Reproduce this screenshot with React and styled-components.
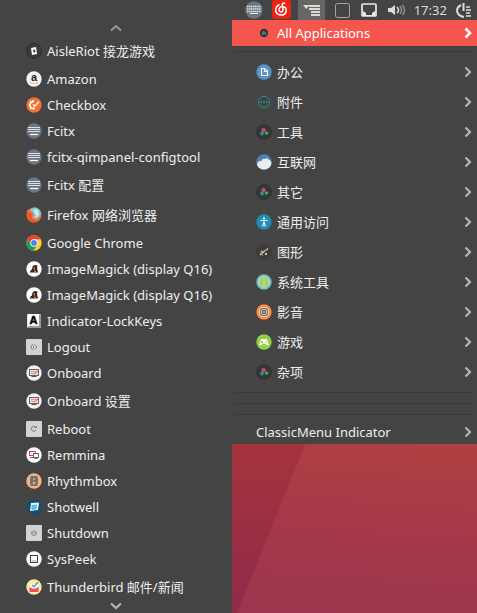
import React from "react";
import styled, { createGlobalStyle, css } from "styled-components";

const GlobalStyle = createGlobalStyle`
  * { box-sizing: border-box; }
  body {
    margin: 0;
    background: #444444;
    color: #eeeeec;
    font-family: "Noto Sans", "Noto Sans CJK SC", sans-serif;
    font-size: 13px;
  }
`;

const Desktop = styled.div`
  display: grid;
  grid-template-columns: 232fr 245fr;
  min-height: 100vh;
`;

const SubMenu = styled.nav`
  display: flex;
  flex-direction: column;
  background: #444444;
`;

const Side = styled.div`
  display: flex;
  flex-direction: column;
`;

const CategoryMenu = styled.nav`
  display: flex;
  flex-direction: column;
  background: #444444;
`;

const MenuList = styled.ul`
  list-style: none;
  margin: 0;
  padding: 0;
`;

const ScrollButton = styled.button`
  display: flex;
  align-items: center;
  justify-content: center;
  height: ${(p) => (p.$up ? "36px" : "11px")};
  padding: ${(p) => (p.$up ? "20px 0 0" : "0 0 4px")};
  border: 0;
  background: none;
  color: ${(p) => (p.$up ? "#999999" : "#b4b4b4")};
`;

const MenuButton = styled.button`
  display: flex;
  align-items: center;
  gap: 5px;
  width: 100%;
  height: 26px;
  padding: 0 5px 0 26px;
  border: 0;
  background: none;
  color: inherit;
  font: inherit;
  line-height: 20px;
  text-align: left;
  white-space: nowrap;
  ${(p) => p.$tall && css`height: 30px;`}
  ${(p) => p.$category && css`padding-left: 24px;`}
  ${(p) => p.$active && css`background: #f4554d; color: #ffffff;`}
  ${(p) => p.$last && css`height: 24px;`}
`;

const Label = styled.span`
  flex: 1;
`;

const Glyph = styled.svg`
  display: block;
  flex: none;
  overflow: visible;
`;

const Chevron = styled.svg`
  flex: none;
  color: ${(p) => (p.$active ? "#ffffff" : "#b4b4b4")};
`;

const Separator = styled.hr`
  width: auto;
  height: 1px;
  margin: 5px 4px 5px 3px;
  border: 0;
  background: #3a3a3a;
`;

const Panel = styled.header`
  display: flex;
  align-items: center;
  justify-content: space-between;
  height: 20px;
  padding: 0 3px 0 12px;
  background: #444444;
`;

const PanelButton = styled.button`
  display: flex;
  align-items: center;
  justify-content: center;
  min-width: ${(p) => (p.$open ? "27px" : "20px")};
  height: 20px;
  padding: 0;
  border: 0;
  background: ${(p) => (p.$open ? "#666666" : "none")};
  color: #dfdbd2;
  font: inherit;
`;

const Wallpaper = styled.div`
  position: relative;
  flex: 1;
  background: linear-gradient(184deg, #b04041 0%, #a4384a 55%, #9b364e 100%);
  &::before {
    content: "";
    position: absolute;
    inset: 0;
    background: linear-gradient(180deg, #a5333c, #912b4b);
    clip-path: polygon(0 0, 30% 0, 2% 100%, 0 100%);
  }
`;

const drawings = {
  cards: (
    <>
      <circle cx="8" cy="8" r="7.5" fill="#3a3a3a" stroke="#2d2d2d" />
      <path d="M5 5l5-1 1 7-5 1z" fill="#fff" />
      <path d="M8 6l1.5 2L8.3 10 7 8z" fill="#333" />
    </>
  ),
  amazon: (
    <>
      <circle cx="8" cy="8" r="7.7" fill="#f3f3f3" />
      <text x="8" y="10" textAnchor="middle" fontFamily="Liberation Sans, sans-serif" fontSize="11" fontWeight="700" fill="#222">a</text>
      <path d="M4 11.5q4 2 8 0" fill="none" stroke="#f5b66a" strokeWidth="1.2" />
    </>
  ),
  checkbox: (
    <>
      <circle cx="8" cy="8" r="7.7" fill="#f6712d" />
      <path d="M7.500 5A3.2 3.2 0 1 0 8.5 11M4 4l1.4 1.4M2.8 8h2M4.2 12l1.4-1.4M7 3v2M8 10.500v2" fill="none" stroke="#fff" strokeWidth="1.6" />
      <path d="M7 7.5L8.7 9.3 13 4.8" fill="none" stroke="#fff" strokeWidth="1.4" />
    </>
  ),
  keyboard: (
    <>
      <circle cx="8" cy="8" r="7.7" fill="#6c7682" />
      <path d="M2 4.5h12M2 6.5h12M2 8.5h12" stroke="#dde0e3" strokeWidth="1.2" />
      <path d="M4 11.5h8" stroke="#fff" strokeWidth="1.3" />
    </>
  ),
  firefox: (
    <>
      <circle cx="8" cy="8" r="7.7" fill="#e9592c" />
      <path d="M4 2.5Q8-.8 12 1.6 15.5 4 14.8 8 14 13 9.5 12.8 6 12.3 6.2 9L9 8 6 7 5 4z" fill="#7ec9dd" />
      <path d="M8 2l4 1 1 4-2 4-2 1 1-4-2-2z" fill="#c5e9ee" />
      <path d="M1 5l2-2 1 2 3 1-1 2 1 3 3 1 4-2" fill="none" stroke="#f37940" strokeWidth="1.3" />
    </>
  ),
  chrome: (
    <>
      <circle cx="8" cy="8" r="7.7" fill="#ffce32" />
      <path d="M1.3 4.1A7.7 7.7 0 0 1 14.7 4.2H8L4.6 9.9z" fill="#ea4335" />
      <path d="M1.3 4.1L4.7 10 8 11.8 11 10.2 7.5 15.7A7.7 7.7 0 0 1 1.3 4.1z" fill="#17a05d" />
      <circle cx="8" cy="8" r="3.7" fill="#fff" />
      <circle cx="8" cy="8" r="2.9" fill="#4285f4" />
    </>
  ),
  magick: (
    <>
      <circle cx="8" cy="8" r="7.7" fill="#fff" />
      <path d="M4 11.500l.5-2 1.500-1 .5-3 2-1.500 3 .5L11 7l1 4.500z" fill="#29252b" />
      <path d="M7.500 6.700l1.500.6M8.500 10.800h1.500" stroke="#f29b25" strokeWidth="1.4" />
      <circle cx="8.500" cy="9" r="1" fill="#e04435" />
    </>
  ),
  lock: (
    <>
      <rect x="1" y="1" width="14" height="14" rx="1" fill="#ddd" />
      <path d="M1 15l2-2h9.5V2L15 1v14z" fill="#999" />
      <rect x="2" y="1" width="11" height="11.5" fill="#fff" />
      <text x="7.500" y="11" textAnchor="middle" fontFamily="Liberation Sans, sans-serif" fontSize="11" fontWeight="700" fill="#000" stroke="#000" strokeWidth=".5">A</text>
    </>
  ),
  logout: (
    <>
      <rect width="16" height="16" rx="1" fill="#d2d2d2" />
      <path d="M7.5 5.5a2.5 2.5 0 1 0 0 5M8.5 5.5L11 8l-2.500 2.5M7.5 7v2" fill="none" stroke="#888" />
    </>
  ),
  reboot: (
    <>
      <rect width="16" height="16" rx="1" fill="#d2d2d2" />
      <path d="M9.5 6a2.5 2.5 0 1 0 .5 3M8.5 6.500h2V5" fill="none" stroke="#777" />
    </>
  ),
  shutdown: (
    <>
      <rect width="16" height="16" rx="1" fill="#d2d2d2" />
      <path d="M6.5 6a2.5 2.5 0 1 0 3 0M5 8h6M8 5v2" fill="none" stroke="#888" />
    </>
  ),
  onboard: (
    <>
      <circle cx="8" cy="8" r="7.7" fill="#f1f1f1" />
      <rect x="3.5" y="4.5" width="9" height="6" fill="#eadede" stroke="#666" />
      <path d="M5 6.5h6M5 8.5h4" stroke="#ef9090" />
      <path d="M8.500 9L12 6" stroke="#e15d5d" />
      <path d="M5.5 11.5h5" stroke="#555" />
    </>
  ),
  remmina: (
    <>
      <circle cx="8" cy="8" r="7.7" fill="#fff" />
      <rect x="3.5" y="4.5" width="6" height="4" fill="#fff" stroke="#dc3d63" />
      <path d="M4 10.500h3" stroke="#dc3d63" />
      <rect x="7.5" y="6.5" width="5" height="4" fill="#fff" stroke="#5b6576" />
      <path d="M8.5 11.500h3" stroke="#5b6576" />
    </>
  ),
  rhythm: (
    <>
      <circle cx="8" cy="8" r="7.7" fill="#ffb17c" />
      <rect x="4" y="3" width="8" height="10" rx="1" fill="#687176" />
      <path d="M5 4v1M11 4v1M5 11v1M11 11v1" stroke="#a3a9a3" />
      <circle cx="8" cy="6" r="1" fill="#dfb25a" />
      <circle cx="8" cy="10" r="1.5" fill="#dfb25a" />
    </>
  ),
  shotwell: (
    <>
      <circle cx="8" cy="8" r="7.7" fill="#144c6a" />
      <path d="M5 4l8-.5-1 7.500-8 1z" fill="#e9f8ff" />
      <path d="M5.500 6l5.500-.5-.5 5-5 .5z" fill="#62bbed" />
    </>
  ),
  syspeek: (
    <>
      <circle cx="8" cy="8" r="7.7" fill="#fff" />
      <rect x="4.5" y="4.5" width="7" height="7" fill="#fff" stroke="#444" />
      <path d="M5.5 10h5" stroke="#999" />
    </>
  ),
  mail: (
    <>
      <circle cx="8" cy="8" r="7.7" fill="#fce9a8" />
      <path d="M4 5h8v6H4z" fill="#fff" />
      <path d="M3.5 8L8 10l4.5-2v5h-9z" fill="#ef5350" />
      <path d="M6 6L8 8 12 3" fill="none" stroke="#49a4bc" strokeWidth="1.5" />
    </>
  ),
  office: (
    <>
      <circle cx="8" cy="8" r="7.7" fill="#5b91c7" />
      <path d="M5.5 4.5h3L11.5 7v4.5h-6zM8.5 4.5V7.5h3" fill="none" stroke="#edf5ff" strokeWidth="1.2" />
    </>
  ),
  dots: (
    <>
      <circle cx="8" cy="8" r="5.7" fill="none" stroke="#298c91" />
      <path d="M4 8h2M7 8h2M10 8h2" stroke="#298c91" strokeWidth="1.500" />
    </>
  ),
  rings: (
    <>
      <circle cx="8" cy="8" r="7.5" fill="#373737" stroke="#323232" />
      <circle cx="7.5" cy="6" r="1.5" fill="#bd3f4c" stroke="#ed6071" />
      <circle cx="6" cy="9.5" r="1.4" fill="#257c9f" stroke="#35a2c9" />
      <circle cx="10.5" cy="9" r="1.3" fill="#319c47" stroke="#42b966" />
    </>
  ),
  ringsSmall: (
    <>
      <circle cx="8" cy="8" r="4.2" fill="#30383d" />
      <circle cx="7.6" cy="7" r="1.1" fill="#bb5360" />
      <circle cx="7" cy="8.7" r="1.1" fill="#3796bc" />
      <circle cx="9.3" cy="8.4" r="1.1" fill="#3c9f66" />
    </>
  ),
  cloud: (
    <>
      <circle cx="8" cy="8" r="7.7" fill="#4f81b7" />
      <path d="M1 10Q2 6.5 5.5 7 6 4 9 5q2-1.5 3.5.5 2.5.5 3 4A7.7 7.7 0 0 1 1 11z" fill="#ededed" />
    </>
  ),
  access: (
    <>
      <circle cx="8" cy="8" r="7.7" fill="#238cb8" />
      <circle cx="8" cy="4.5" r="1.2" fill="#e8f5fa" />
      <path d="M4.5 6.5h7M8 6v3M8 8l-1.5 4.5M8 8l1.5 4.5" stroke="#e8f5fa" strokeWidth="1.2" />
    </>
  ),
  graphics: (
    <>
      <circle cx="8" cy="8" r="7.5" fill="#3d3d3d" stroke="#393939" />
      <path d="M5 7l2 1M4 11l6-5" stroke="#cfc6ba" strokeWidth="1.3" />
      <path d="M9 5h2v2H9z" fill="#cb6c69" />
      <path d="M11 5h1M9 10h2" stroke="#e9ba64" strokeWidth="1.8" />
      <path d="M4 9h2M6 11h1" stroke="#729ba7" strokeWidth="1.5" />
    </>
  ),
  system: (
    <>
      <circle cx="8" cy="8" r="7.7" fill="#76bfc2" />
      <circle cx="8" cy="8" r="5" fill="#a6cd62" stroke="#dbe5b9" />
      <path d="M8 5v6" stroke="#c8dd8a" strokeWidth="1.5" />
    </>
  ),
  media: (
    <>
      <circle cx="8" cy="8" r="7.7" fill="#fd853f" />
      <rect x="3.5" y="3.5" width="9" height="9" rx="3" fill="#63707a" stroke="#f2dfbb" />
      <circle cx="8" cy="8" r="2.7" fill="#566471" stroke="#efcda5" />
      <circle cx="8" cy="8" r=".8" fill="#ffdf91" />
    </>
  ),
  game: (
    <>
      <circle cx="8" cy="8" r="7.7" fill="#8dd14d" />
      <path d="M5 5h6l2 6-2 .5-2-2H7l-2 2L3 11z" fill="#fafbdc" />
      <path d="M5 8h2M6 7v2M10 8h1" stroke="#8dad66" />
    </>
  ),
};

function Icon({ name }) {
  return (
    <Glyph width="16" height="16" viewBox="0 0 16 16" aria-hidden="true">
      {drawings[name]}
    </Glyph>
  );
}

function Arrow({ active }) {
  return (
    <Chevron $active={active} width="8" height="12" viewBox="0 0 8 12" aria-hidden="true">
      <path d="M1.5 1.5L6 6 1.5 10.5" fill="none" stroke="currentColor" strokeWidth={active ? "2.6" : "2.2"} />
    </Chevron>
  );
}

const applications = [
  ["cards", "AisleRiot 接龙游戏", true],
  ["amazon", "Amazon"],
  ["checkbox", "Checkbox"],
  ["keyboard", "Fcitx"],
  ["keyboard", "fcitx-qimpanel-configtool"],
  ["keyboard", "Fcitx 配置", true],
  ["firefox", "Firefox 网络浏览器", true],
  ["chrome", "Google Chrome"],
  ["magick", "ImageMagick (display Q16)"],
  ["magick", "ImageMagick (display Q16)"],
  ["lock", "Indicator-LockKeys"],
  ["logout", "Logout"],
  ["onboard", "Onboard"],
  ["onboard", "Onboard 设置", true],
  ["reboot", "Reboot"],
  ["remmina", "Remmina"],
  ["rhythm", "Rhythmbox"],
  ["shotwell", "Shotwell"],
  ["shutdown", "Shutdown"],
  ["syspeek", "SysPeek"],
  ["mail", "Thunderbird 邮件/新闻", true],
];

const categories = [
  ["office", "办公"],
  ["dots", "附件"],
  ["rings", "工具"],
  ["cloud", "互联网"],
  ["rings", "其它"],
  ["access", "通用访问"],
  ["graphics", "图形"],
  ["system", "系统工具"],
  ["media", "影音"],
  ["game", "游戏"],
  ["rings", "杂项"],
];

function TopPanel() {
  return (
    <Panel>
      <PanelButton aria-label="Input method">
        <Glyph width="18" height="18" viewBox="0 0 18 18">
          <circle cx="9" cy="9" r="8.7" fill="#6c7682" />
          <path d="M2 5.5h14M2 8h14M2 10.500h14" stroke="#e0e3e5" strokeWidth="1.6" strokeDasharray="1.5 .5" />
          <path d="M5 12.500h8" stroke="#eee" />
        </Glyph>
      </PanelButton>
      <PanelButton aria-label="Music">
        <Glyph width="19" height="20" viewBox="0 0 19 20">
          <rect y="0" width="19" height="19" rx="3" fill="#eb2416" />
          <path d="M7.500 4.500C3.500 6 2.500 11 5 13.500s8 2 9-1.500-1-6-4-5.500-4 4-2 5.200 3.500-1 3-3.200L10.200 5c-.2-2 1.500-2.500 3-1.300" fill="none" stroke="#fff" strokeWidth="1.5" />
        </Glyph>
      </PanelButton>
      <PanelButton $open aria-label="Applications menu">
        <Glyph width="17" height="12" viewBox="0 0 17 12">
          <path d="M0 1h6.500L3.200 5z" fill="#dfdbd2" />
          <path d="M6 2h11M6 5h11M8 8h9M8 11h9" stroke="#dfdbd2" strokeWidth="2" />
        </Glyph>
      </PanelButton>
      <PanelButton aria-label="Lock keys">
        <Glyph width="15" height="15" viewBox="0 0 15 15">
          <rect x=".5" y=".5" width="14" height="14" rx="2" fill="none" stroke="#a8a6a1" />
        </Glyph>
      </PanelButton>
      <PanelButton aria-label="Network">
        <Glyph width="16" height="14" viewBox="0 0 16 14">
          <path d="M2 1h12a1 1 0 0 1 1 1v10a1 1 0 0 1-1 1H2a1 1 0 0 1-1-1V2a1 1 0 0 1 1-1z" fill="none" stroke="#eceae5" strokeWidth="1.7" />
          <path d="M2 8l3 2v2h6v-2l3-2v5H2z" fill="#eceae5" />
        </Glyph>
      </PanelButton>
      <PanelButton aria-label="Volume">
        <Glyph width="18" height="12" viewBox="0 0 18 12">
          <path d="M0 4h3l4-3v10L3 8H0z" fill="#dfdbd2" />
          <path d="M9 3q3 3 0 6" fill="none" stroke="#dfdbd2" strokeWidth="1.5" />
          <path d="M12 2q3 4 0 8M14.500 1q4 5 0 10" fill="none" stroke="#96938d" strokeWidth="1.3" />
        </Glyph>
      </PanelButton>
      <PanelButton>17:32</PanelButton>
      <PanelButton aria-label="Session">
        <Glyph width="16" height="15" viewBox="0 0 16 15">
          <path d="M5 2Q1 4 1 8q1 5 7 6M7.500 0v8" fill="none" stroke="#dfdbd2" strokeWidth="2" />
          <path d="M10 4h4M10 7h5M10 10h4M10 13h5" stroke="#dfdbd2" strokeWidth="1.6" />
        </Glyph>
      </PanelButton>
    </Panel>
  );
}

export default function App() {
  return (
    <>
      <GlobalStyle />
      <Desktop>
        <SubMenu aria-label="All Applications">
          <ScrollButton $up aria-label="Scroll up">
            <Glyph width="12" height="8" viewBox="0 0 12 8">
              <path d="M1 6.5L6 2l5 4.5" fill="none" stroke="currentColor" strokeWidth="2" />
            </Glyph>
          </ScrollButton>
          <MenuList>
            {applications.map(([icon, label, tall], i) => (
              <li key={i}>
                <MenuButton $tall={tall}>
                  <Icon name={icon} />
                  <Label>{label}</Label>
                </MenuButton>
              </li>
            ))}
          </MenuList>
          <ScrollButton aria-label="Scroll down">
            <Glyph width="12" height="8" viewBox="0 0 12 8">
              <path d="M1 1.5L6 6l5-4.5" fill="none" stroke="currentColor" strokeWidth="2.2" />
            </Glyph>
          </ScrollButton>
        </SubMenu>
        <Side>
          <TopPanel />
          <CategoryMenu aria-label="Categories">
            <MenuButton $category $active>
              <Icon name="ringsSmall" />
              <Label>All Applications</Label>
              <Arrow active />
            </MenuButton>
            <Separator />
            <MenuList>
              {categories.map(([icon, label]) => (
                <li key={label}>
                  <MenuButton $category $tall>
                    <Icon name={icon} />
                    <Label>{label}</Label>
                    <Arrow />
                  </MenuButton>
                </li>
              ))}
            </MenuList>
            <Separator />
            <Separator />
            <Separator />
            <MenuButton $category $last>
              <Label>ClassicMenu Indicator</Label>
              <Arrow />
            </MenuButton>
          </CategoryMenu>
          <Wallpaper />
        </Side>
      </Desktop>
    </>
  );
}
